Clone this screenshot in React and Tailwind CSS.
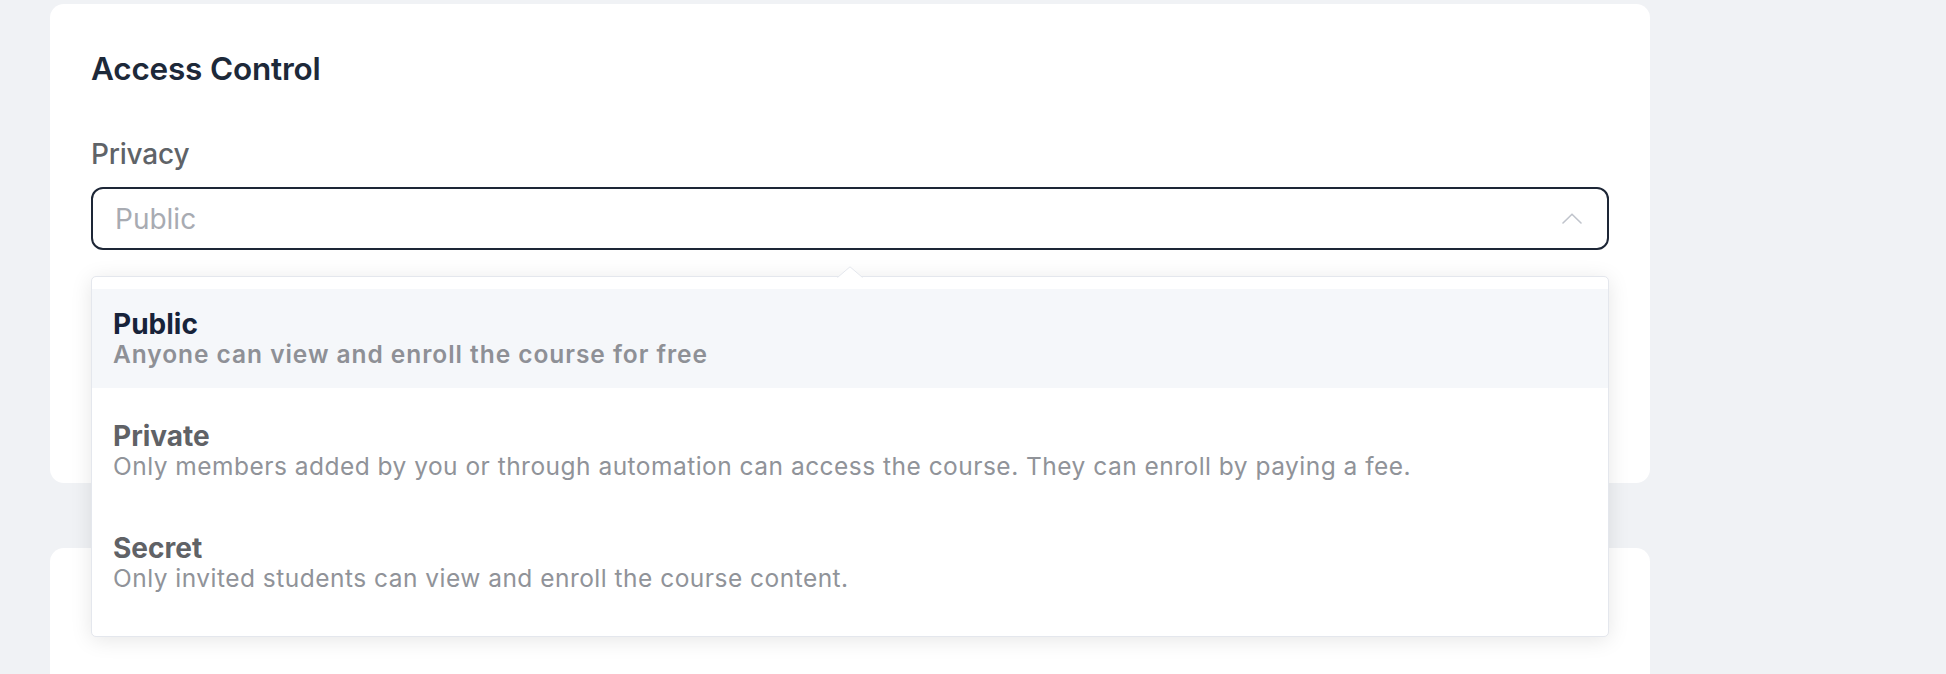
import React, { useState } from 'react'

// Access Control card with an open privacy dropdown (Element-style select)

const options = [
  { value: 'public', label: 'Public', desc: 'Anyone can view and enroll the course for free' },
  { value: 'private', label: 'Private', desc: 'Only members added by you or through automation can access the course. They can enroll by paying a fee.' },
  { value: 'secret', label: 'Secret', desc: 'Only invited students can view and enroll the course content.' },
]

function ChevronUp() {
  return (
    <svg width="20" height="11" viewBox="0 0 20 11" fill="none" className="shrink-0">
      <path d="M1 10L10 1.2L19 10" stroke="#c0c4cc" strokeWidth="1.6" strokeLinecap="round" strokeLinejoin="round" />
    </svg>
  )
}

function Caret() {
  return (
    <svg width="26" height="12" viewBox="0 0 26 12" className="absolute left-1/2 -translate-x-1/2 -top-[11px]">
      <path d="M0 12L13 0.8L26 12Z" fill="#ffffff" />
      <path d="M0.5 11.5L13 0.8L25.5 11.5" fill="none" stroke="#e4e7ed" strokeWidth="1" />
    </svg>
  )
}

export default function App() {
  const [open] = useState(true)
  const [hovered, setHovered] = useState('public')

  return (
    <div className="min-h-screen bg-[#f0f2f5] pl-[50px] pt-[4px] font-['Inter','Noto_Sans',sans-serif]">
      <div className="w-[1600px] flex flex-col gap-[65px]">
        {/* Access Control card */}
        <div className="bg-white rounded-[14px] px-[41px] pt-[45px] h-[479px]">
          <h2 className="text-[31.5px] leading-[40px] font-semibold text-[#1d2939] tracking-[-0.2px]">Access Control</h2>

          <div className="mt-[47px] text-[28px] leading-[36px] font-medium text-[#5f6368] tracking-[-0.2px]">Privacy</div>

          <div className="relative mt-[15px]">
            <div className="h-[63px] w-full border-[2px] border-[#1d2636] rounded-[12px] flex items-center justify-between pl-[22px] pr-[25px]">
              <span className="text-[28px] leading-[28px] text-[#a8abb2]">Public</span>
              <ChevronUp />
            </div>

            {open && (
              <div className="absolute left-0 right-0 top-[89px] z-10 bg-white border border-[#e4e7ed] rounded-[5px] shadow-[0_3px_21px_rgba(0,0,0,0.1)] pt-[12px] pb-[11px]">
                <Caret />
                {options.map((o) => {
                  const active = hovered === o.value
                  const selected = o.value === 'public'
                  return (
                    <div
                      key={o.value}
                      onMouseEnter={() => setHovered(o.value)}
                      className={`mb-[13px] px-[21px] pt-[20px] pb-[19px] cursor-pointer ${active ? 'bg-[#f5f7fa]' : 'bg-white'}`}
                    >
                      <div className={`text-[28px] leading-[30px] font-bold ${selected ? 'text-[#17233a]' : 'text-[#606266]'}`}>{o.label}</div>
                      <div className={`text-[24.5px] leading-[30px] ${selected ? 'font-semibold text-[#8e9096] tracking-[0.95px]' : 'font-normal text-[#909399] tracking-[0.48px]'}`}>{o.desc}</div>
                    </div>
                  )
                })}
              </div>
            )}
          </div>
        </div>

        {/* next card (partially visible) */}
        <div className="bg-white rounded-[14px] h-[200px]" />
      </div>
    </div>
  )
}
